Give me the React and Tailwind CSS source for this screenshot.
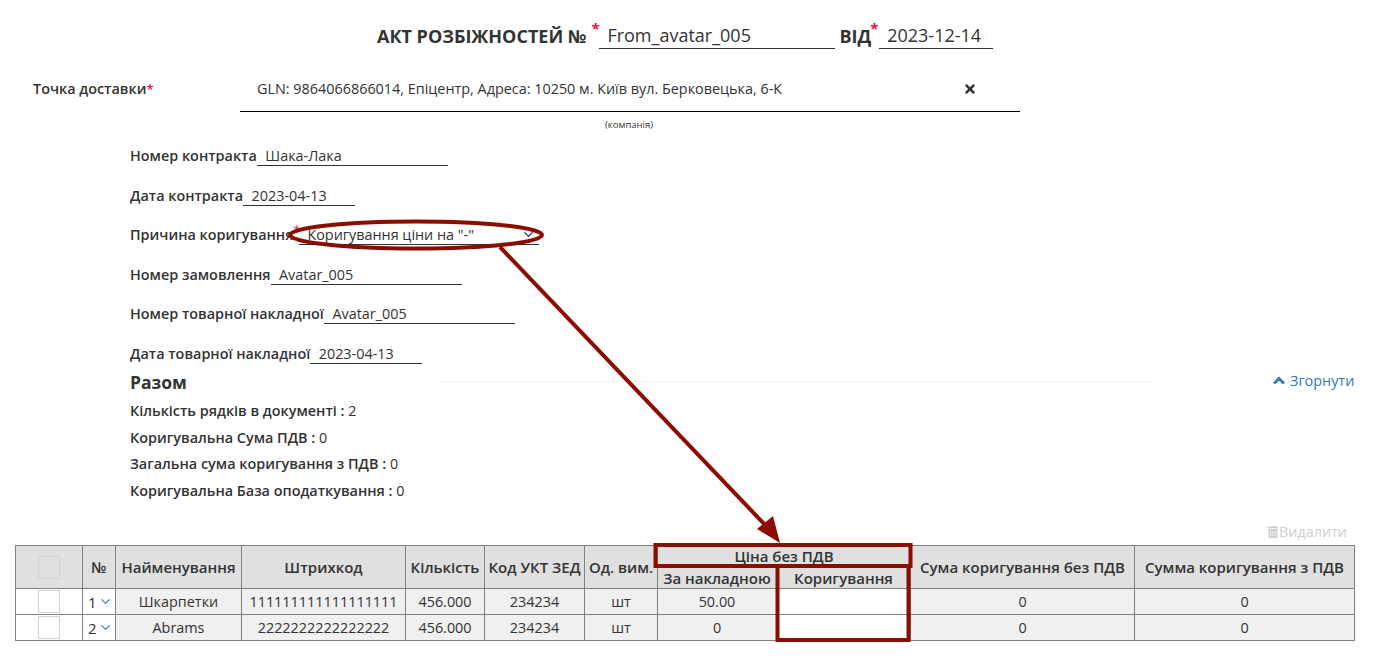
import React from "react";
import { FaTimes, FaTrashAlt } from "react-icons/fa";
import { ChevronDown } from "lucide-react";

function Field({ label, value, w, star, select }) {
  return (
    <div className="flex items-end h-[21px] mb-[18.5px]">
      <span className="font-semibold whitespace-nowrap leading-[20px]">{label}</span>
      {star && <span className="text-[#e2114f] text-[11px] self-start -mt-[3px] w-0">*</span>}
      <div
        className={`border-b border-[#333] flex items-end justify-between leading-[18px] whitespace-nowrap ${select ? "pl-[8px] pr-[3px] ml-[6px]" : "pl-[8.5px]"}`}
        style={{ width: w }}
      >
        <span>{value}</span>
        {select && <ChevronDown size={15} strokeWidth={2} className="mb-[2px]" />}
      </div>
    </div>
  );
}

const Th = ({ children, className = "", ...p }) => (
  <th className={`border border-[#808080] bg-[#e0e0e0] font-semibold text-[15px] text-center p-0 whitespace-nowrap ${className}`} {...p}>
    {children}
  </th>
);
const Td = ({ children, className = "" }) => (
  <td className={`border border-[#808080] bg-[#f0f0f0] text-center p-0 whitespace-nowrap ${className}`}>{children}</td>
);

function Row({ n, name, code, price }) {
  return (
    <tr className="h-[26px]">
      <td className="border border-[#808080] bg-white p-0">
        <div className="w-[22px] h-[23px] border border-[#d4d4cf] bg-white mx-auto" />
      </td>
      <td className="border border-[#808080] bg-white p-0 pl-[5px] text-left">
        <div className="flex items-center gap-[1px]">
          <span className="text-[15px]">{n}</span>
          <ChevronDown size={15} strokeWidth={1.8} className="text-[#337ab7]" />
        </div>
      </td>
      <Td>{name}</Td>
      <Td>{code}</Td>
      <Td>456.000</Td>
      <Td>234234</Td>
      <Td>шт</Td>
      <Td>{price}</Td>
      <td className="border border-[#808080] bg-white p-0" />
      <Td>0</Td>
      <Td>0</Td>
    </tr>
  );
}

export default function App() {
  return (
    <div className="relative w-[1382px] h-[665px] overflow-hidden bg-white text-[#333] text-[14.4px] font-['Open_Sans',sans-serif]">
      <div className="flex items-end h-[49px] pl-[377px]">
        <span className="font-bold text-[18px] leading-[26px] whitespace-nowrap">АКТ РОЗБІЖНОСТЕЙ №</span>
        <span className="text-[#e2114f] text-[15px] font-bold self-start mt-[20px] w-[13px] pl-[5px] leading-[16px]">*</span>
        <div className="w-[236px] border-b border-[#333] text-[18px] leading-[26px] pl-[8px]">From_avatar_005</div>
        <span className="font-bold text-[18px] leading-[26px] ml-[4px]">ВІД</span>
        <span className="text-[#e2114f] text-[15px] font-bold self-start mt-[20px] w-[9px] -ml-[1px] leading-[16px]">*</span>
        <div className="w-[114px] border-b border-[#333] text-[18px] leading-[26px] pl-[8px]">2023-12-14</div>
      </div>

      <div className="flex h-[63px] pl-[33px]">
        <div className="w-[207px] pt-[30px] font-semibold leading-[20px]">
          Точка доставки<span className="text-[#e2114f] text-[13px] align-top">*</span>
        </div>
        <div className="w-[780px] border-b border-black flex justify-between pl-[17px] pr-[43px] pt-[30px] leading-[20px]">
          <span>GLN: 9864066866014, Епіцентр, Адреса: 10250 м. Київ вул. Берковецька, 6-К</span>
          <FaTimes size={14} className="mt-[3px]" />
        </div>
      </div>
      <div className="pl-[605px] text-[9.5px] leading-[13px] h-[22px] pt-[6px]">(компанія)</div>

      <div className="ml-[130px] mt-[11px]">
        <Field label="Номер контракта" value="Шака-Лака" w={191} />
        <Field label="Дата контракта" value="2023-04-13" w={112} />
        <Field label="Причина коригування" value={'Коригування ціни на "-"'} w={240} star select />
        <Field label="Номер замовлення" value="Avatar_005" w={191} />
        <Field label="Номер товарної накладної" value="Avatar_005" w={191} />
        <Field label="Дата товарної накладної" value="2023-04-13" w={112} />
      </div>

      <div className="flex items-center h-[26px] -mt-[13px] pl-[130px]">
        <span className="font-bold text-[17.5px] w-[310px] leading-[26px]">Разом</span>
        <div className="w-[711px] border-t border-dotted border-[#e4e4e4] -mt-[2px]" />
        <div className="ml-[122px] flex items-center gap-[5px] text-[#337ab7] -mt-[2px]">
          <svg width="12" height="9" viewBox="0 0 12 9" fill="none" stroke="#337ab7" strokeWidth="3">
            <polyline points="1,7.5 6,2.5 11,7.5" />
          </svg>
          <span>Згорнути</span>
        </div>
      </div>
      <div className="pl-[130px] pt-[6px] leading-[20px] flex flex-col gap-[6.7px]">
        <div><span className="font-semibold">Кількість рядків в документі :</span> 2</div>
        <div><span className="font-semibold">Коригувальна Сума ПДВ :</span> 0</div>
        <div><span className="font-semibold">Загальна сума коригування з ПДВ :</span> 0</div>
        <div><span className="font-semibold">Коригувальна База оподаткування :</span> 0</div>
      </div>

      <div className="flex justify-end items-center pr-[35px] mt-[21px] h-[20px] text-[#cfcfcf]">
        <FaTrashAlt size={12} />
        <span>Видалити</span>
      </div>

      <table className="ml-[15px] mt-[3px] w-[1339px] table-fixed border-collapse leading-[20px]">
        <colgroup>
          <col className="w-[67px]" />
          <col className="w-[33px]" />
          <col className="w-[126px]" />
          <col className="w-[164px]" />
          <col className="w-[79px]" />
          <col className="w-[100px]" />
          <col className="w-[73px]" />
          <col className="w-[119px]" />
          <col className="w-[134px]" />
          <col className="w-[224px]" />
          <col className="w-[220px]" />
        </colgroup>
        <thead>
          <tr className="h-[21px]">
            <Th rowSpan={2}>
              <div className="w-[22px] h-[23px] border border-[#d4d4cf] bg-[#e0e0e0] mx-auto" />
            </Th>
            <Th rowSpan={2}>№</Th>
            <Th rowSpan={2}>Найменування</Th>
            <Th rowSpan={2}>Штрихкод</Th>
            <Th rowSpan={2}>Кількість</Th>
            <Th rowSpan={2}>Код УКТ ЗЕД</Th>
            <Th rowSpan={2}>Од. вим.</Th>
            <Th colSpan={2}>Ціна без ПДВ</Th>
            <Th rowSpan={2}>Сума коригування без ПДВ</Th>
            <Th rowSpan={2}>Сумма коригування з ПДВ</Th>
          </tr>
          <tr className="h-[22px]">
            <Th>За накладною</Th>
            <Th>Коригування</Th>
          </tr>
        </thead>
        <tbody>
          <Row n="1" name="Шкарпетки" code="111111111111111111" price="50.00" />
          <Row n="2" name="Abrams" code="2222222222222222" price="0" />
        </tbody>
      </table>

      <svg className="absolute left-0 top-0 pointer-events-none" width="1382" height="665" fill="none" stroke="#8b0d00">
        <ellipse cx="416" cy="235" rx="126" ry="13.5" strokeWidth="4" />
        <line x1="500" y1="247" x2="768" y2="528" strokeWidth="4" />
        <polygon points="780,543 757,529 773,516" fill="#8b0d00" stroke="none" />
        <rect x="655.5" y="545" width="255" height="21" strokeWidth="4" />
        <rect x="777.5" y="566" width="131" height="74" strokeWidth="4" />
      </svg>
    </div>
  );
}
